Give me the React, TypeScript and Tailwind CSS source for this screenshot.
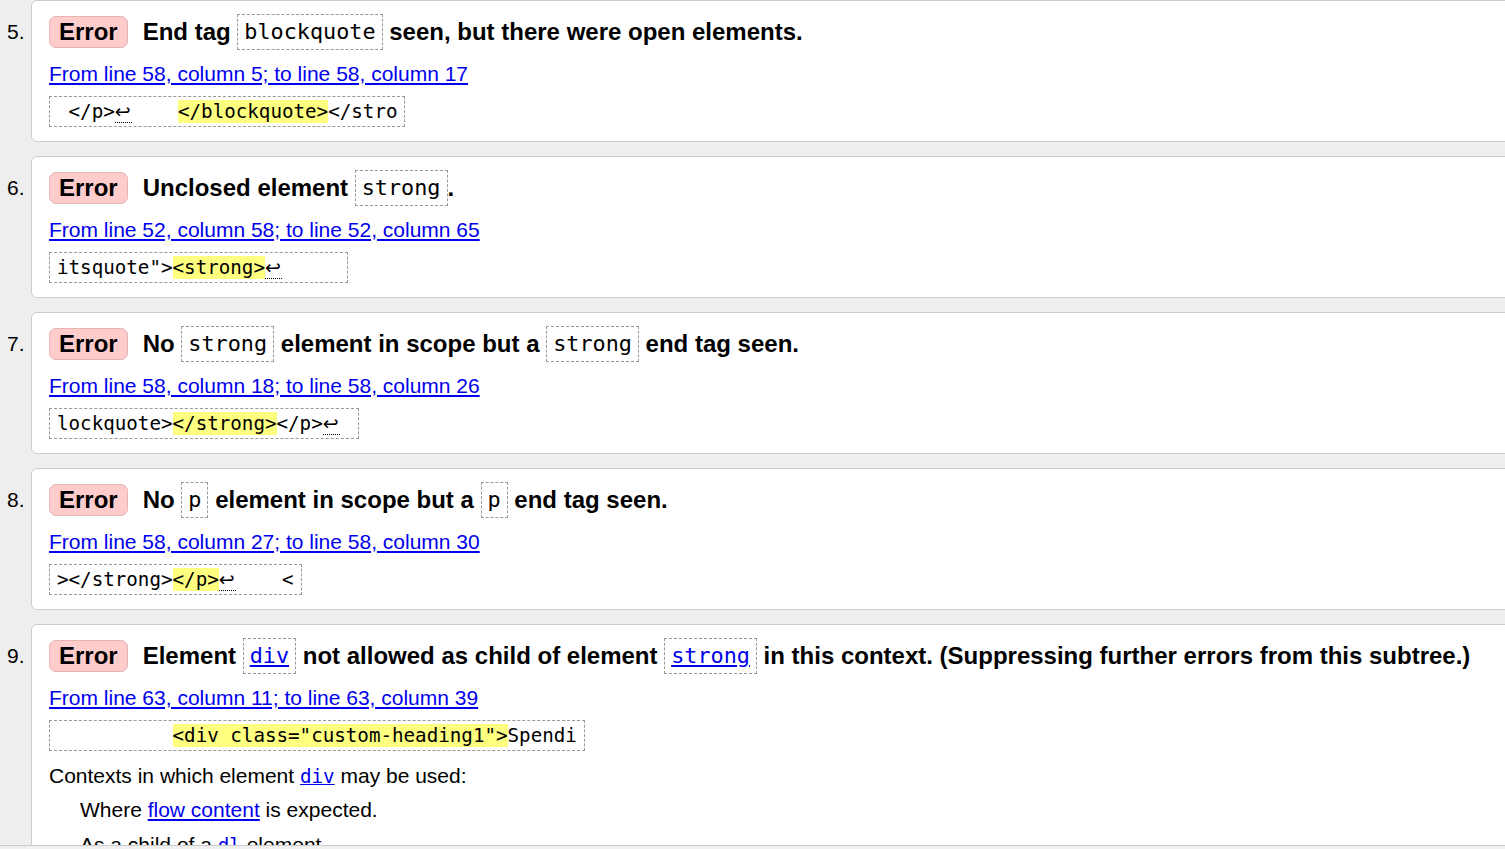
import type { ReactNode } from 'react';

const mono = "font-['DejaVu_Sans_Mono',monospace]";

function Code({ children, link }: { children: ReactNode; link?: boolean }) {
  return (
    <span
      className={`${mono} inline-block h-[36px] align-top border border-dashed border-[#999] px-[6px] text-[21.8px] font-normal leading-[34px] ${
        link ? 'text-[#0000ee] underline' : 'text-black'
      }`}
    >
      {children}
    </span>
  );
}

function Ret() {
  return (
    <span className="inline-block w-[17px] border-b border-dotted border-black font-['DejaVu_Sans',sans-serif] text-[19px] leading-[22px]">
      ↩
    </span>
  );
}

function Hl({ children }: { children: ReactNode }) {
  return <span className="bg-[#ffff80]">{children}</span>;
}

interface Msg {
  num: number;
  title: ReactNode;
  link: string;
  extract: ReactNode;
  extra?: ReactNode;
}

const messages: Msg[] = [
  {
    num: 5,
    title: (
      <>
        End tag <Code>blockquote</Code> seen, but there were open elements.
      </>
    ),
    link: 'From line 58, column 5; to line 58, column 17',
    extract: (
      <>
        {' </p>'}
        <Ret />
        {'    '}
        <Hl>{'</blockquote>'}</Hl>
        {'</stro'}
      </>
    ),
  },
  {
    num: 6,
    title: (
      <>
        Unclosed element <Code>strong</Code>.
      </>
    ),
    link: 'From line 52, column 58; to line 52, column 65',
    extract: (
      <>
        {'itsquote">'}
        <Hl>{'<strong>'}</Hl>
        <Ret />
        {'     '}
      </>
    ),
  },
  {
    num: 7,
    title: (
      <>
        No <Code>strong</Code> element in scope but a <Code>strong</Code> end tag seen.
      </>
    ),
    link: 'From line 58, column 18; to line 58, column 26',
    extract: (
      <>
        {'lockquote>'}
        <Hl>{'</strong>'}</Hl>
        {'</p>'}
        <Ret />
        {' '}
      </>
    ),
  },
  {
    num: 8,
    title: (
      <>
        No <Code>p</Code> element in scope but a <Code>p</Code> end tag seen.
      </>
    ),
    link: 'From line 58, column 27; to line 58, column 30',
    extract: (
      <>
        {'></strong>'}
        <Hl>{'</p>'}</Hl>
        <Ret />
        {'    <'}
      </>
    ),
  },
  {
    num: 9,
    title: (
      <>
        Element <Code link>div</Code> not allowed as child of element <Code link>strong</Code> in this
        context. (Suppressing further errors from this subtree.)
      </>
    ),
    link: 'From line 63, column 11; to line 63, column 39',
    extract: (
      <>
        {'          '}
        <Hl>{'<div class="custom-heading1">'}</Hl>
        {'Spendi'}
      </>
    ),
    extra: (
      <div className="text-[21px] leading-[24px] text-black">
        <p className="mt-[13px]">
          Contexts in which element{' '}
          <a className={`${mono} text-[19.2px] text-[#0000ee] underline`}>div</a> may be used:
        </p>
        <div className="ml-[31px]">
          <p className="mt-[9px]">
            Where <a className="text-[#0000ee] underline">flow content</a> is expected.
          </p>
          <p className="mt-[11px]">
            As a child of a <a className={`${mono} text-[19.2px] text-[#0000ee] underline`}>dl</a> element.
          </p>
        </div>
      </div>
    ),
  },
];

function MessageCard({ m }: { m: Msg }) {
  return (
    <li className="flex mb-[14px]">
      <div className="w-[31px] shrink-0 pl-[7px] pt-[14px] text-[21px] leading-[36px] text-black">{m.num}.</div>
      <div className="flex-1 -mr-[30px] rounded-l-[6px] border border-[#ccc] bg-white pl-[17px] pt-[13px] pb-[14px]">
        <div className="flex items-center gap-[15px]">
          <span className="inline-flex h-[32px] items-center rounded-[7px] border border-[#e3b5b5] bg-[#ffcccc] px-[9px] text-[24px] font-bold text-black">
            Error
          </span>
          <p className="whitespace-nowrap text-[24px] font-bold leading-[36px] text-black">{m.title}</p>
        </div>
        <p className="mt-[12px] text-[21px] leading-[24px]">
          <a className="text-[#0000ee] underline">{m.link}</a>
        </p>
        <div className="mt-[10px]">
          <code
            className={`${mono} inline-block whitespace-pre border border-dashed border-[#999] px-[7px] text-[19.2px] leading-[29px] text-black`}
          >
            {m.extract}
          </code>
        </div>
        {m.extra}
      </div>
    </li>
  );
}

export default function App() {
  return (
    <div className="flex h-[849px] w-[1505px] flex-col overflow-hidden bg-[#eeeeee] font-['Liberation_Sans',Arial,sans-serif]">
      <div className="flex-1 overflow-hidden">
        <ol>
          {messages.map((m) => (
            <MessageCard key={m.num} m={m} />
          ))}
        </ol>
      </div>
      <div className="h-[4px] shrink-0 border-t border-[#cccccc] bg-[#f0f0f0]" />
    </div>
  );
}
